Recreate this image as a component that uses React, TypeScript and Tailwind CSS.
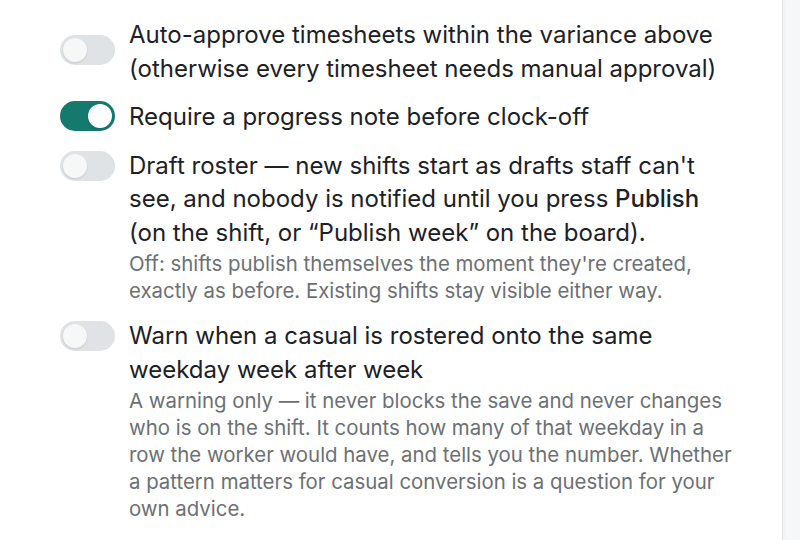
import React, { useState } from 'react';

type Setting = {
  id: string;
  label: React.ReactNode;
  hint?: string;
  on: boolean;
  offset: string;
};

function Toggle({ checked, onChange, className }: { checked: boolean; onChange: () => void; className?: string }) {
  return (
    <button
      type="button"
      role="switch"
      aria-checked={checked}
      onClick={onChange}
      className={`relative shrink-0 w-[55px] h-[30px] rounded-full transition-colors ${
        checked ? 'bg-[#137a6d]' : 'bg-[#dfe3e5]'
      } ${className ?? ''}`}
    >
      <span
        className={`absolute top-[3px] w-[24px] h-[24px] rounded-full shadow-[0_1px_2px_rgba(0,0,0,0.12)] transition-all ${
          checked ? 'left-[28px] bg-white' : 'left-[3px] bg-[#f6f7f7]'
        }`}
      />
    </button>
  );
}

const initial: Setting[] = [
  {
    id: 'auto-approve',
    label: 'Auto-approve timesheets within the variance above (otherwise every timesheet needs manual approval)',
    on: false,
    offset: 'mt-[17px]',
  },
  {
    id: 'progress-note',
    label: 'Require a progress note before clock-off',
    on: true,
    offset: 'mt-[1px]',
  },
  {
    id: 'draft-roster',
    label: (
      <>
        Draft roster — new shifts start as drafts staff can't see, and nobody is notified until you press{' '}
        <span className="font-medium">Publish</span> (on the shift, or “Publish week” on the board).
      </>
    ),
    hint: "Off: shifts publish themselves the moment they're created, exactly as before. Existing shifts stay visible either way.",
    on: false,
    offset: 'mt-[2px]',
  },
  {
    id: 'casual-pattern',
    label: 'Warn when a casual is rostered onto the same weekday week after week',
    hint: 'A warning only — it never blocks the save and never changes who is on the shift. It counts how many of that weekday in a row the worker would have, and tells you the number. Whether a pattern matters for casual conversion is a question for your own advice.',
    on: false,
    offset: 'mt-[2px]',
  },
];

export default function App() {
  const [settings, setSettings] = useState(initial);

  const flip = (id: string) =>
    setSettings(s => s.map(x => (x.id === id ? { ...x, on: !x.on } : x)));

  return (
    <div className="flex w-[800px] h-[540px] overflow-hidden bg-[#f6f7f8] font-['Inter',sans-serif]">
      <div className="w-[783px] shrink-0 bg-white border-r border-[#e2e5e8] shadow-[1px_0_4px_rgba(0,0,0,0.05)] pl-[60px] pr-[44px] pt-[18px]">
        <div className="flex flex-col gap-[15px]">
          {settings.map(s => (
            <div key={s.id} className="flex items-start gap-[14px]">
              <Toggle checked={s.on} onChange={() => flip(s.id)} className={s.offset} />
              <div className="flex-1">
                <p className="text-[24px] leading-[33.5px] text-[#1c2127]">{s.label}</p>
                {s.hint && (
                  <p className="mt-px text-[20.4px] leading-[27px] text-[#6b7075]">{s.hint}</p>
                )}
              </div>
            </div>
          ))}
        </div>
      </div>
    </div>
  );
}
